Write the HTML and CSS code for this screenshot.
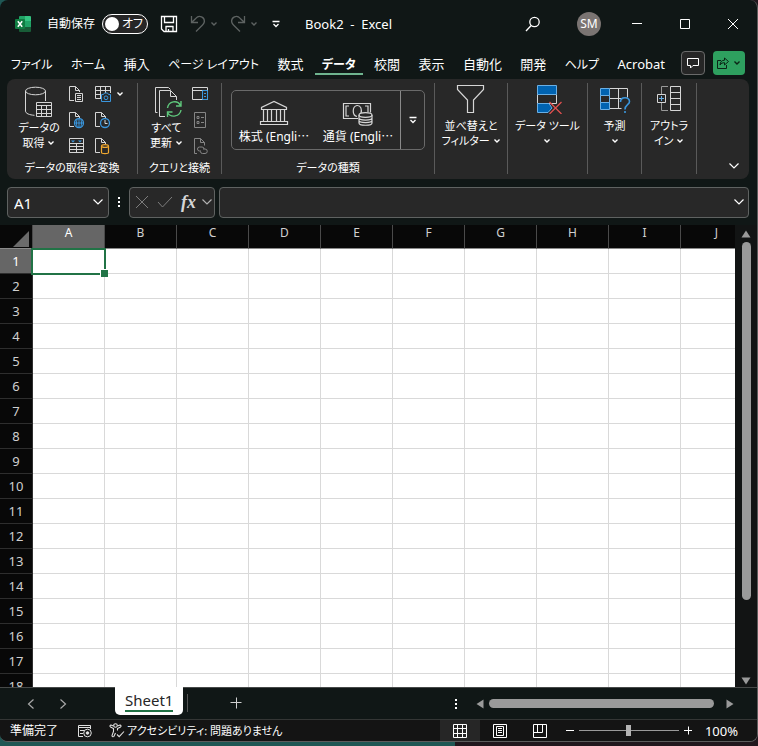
FILE: index.html
```html
<!DOCTYPE html>
<html lang="ja">
<head>
    <meta charset="UTF-8">
    <meta name="viewport" content="width=device-width, initial-scale=1.0">
    <title>Book2 - Excel</title>
    <link rel="stylesheet" href="styles.css">
</head>
<body>

<svg class="defs" aria-hidden="true">
    <symbol id="chev" viewBox="0 0 8 8"><path d="M1.500 2.500 4 5l2.500-2.500" fill="none" stroke="currentColor" stroke-width="1.400"/></symbol>
    <symbol id="chev-lg" viewBox="0 0 12 12"><path d="M1.500 3.500 6 8l4.500-4.500" fill="none" stroke="currentColor" stroke-width="1.200"/></symbol>
    <symbol id="more" viewBox="0 0 8 8"><path d="M.5 1.500h7M1.500 4 4 6.500 6.500 4" fill="none" stroke="currentColor" stroke-width="1.300"/></symbol>
    <symbol id="dots" viewBox="0 0 4 12"><path d="M1 1h2v2H1zM1 5h2v2H1zM1 9h2v2H1z" fill="currentColor"/></symbol>
    <symbol id="page" viewBox="0 0 16 18"><path d="M6 15.500H1.500V1.500h6l4 4V7M7.500 1.500v4h4" fill="none" stroke="#d6d6d6"/></symbol>
</svg>

<div class="window">

    <!-- タイトルバー -->
    <header class="titlebar">
        <svg class="logo" width="16" height="16" viewBox="0 0 16 16">
            <path d="M5 0h6v5H4V1q0-1 1-1z" fill="#21a366"/>
            <path d="M10 0h5q1 0 1 1v4h-6z" fill="#33c481"/>
            <path d="M4 5h6v6H4z" fill="#107c41"/>
            <path d="M10 5h6v6h-6z" fill="#21a366"/>
            <path d="M4 11h12v4q0 1-1 1H5q-1 0-1-1z" fill="#185c37"/>
            <rect y="3" width="10" height="10" rx="1" fill="#107c41"/>
            <path d="M2.800 5.200 7.200 10.800M7.200 5.200 2.800 10.800" stroke="#fff" stroke-width="1.500"/>
        </svg>
        <label class="autosave">
            <span>自動保存</span>
            <span class="switch">
                <input type="checkbox" class="switch-input">
                <span class="knob"></span>
                <span class="switch-text">オフ</span>
            </span>
        </label>
        <div class="quick">
            <button class="icon-btn" aria-label="上書き保存">
                <svg width="18" height="18" viewBox="0 0 18 18" fill="none" stroke="#fff" stroke-width="1.300"><path d="M1.500 1.500h15v15H4l-2.500-2.500zM4.500 1.500v6h9v-6M6 16.500v-5h7v5M8.500 14v2.500"/></svg>
            </button>
            <button class="icon-btn dim" aria-label="元に戻す">
                <svg width="16" height="18" viewBox="0 0 16 18" fill="none" stroke="currentColor" stroke-width="1.300"><path d="M1.500 1v6.500H8M1.500 7.500 6 3.200C9-.3 15 2 14.300 7c-.3 1.500-1 2.300-2 3.300L6 16.500"/></svg>
                <svg width="8" height="8"><use href="#chev"/></svg>
            </button>
            <button class="icon-btn dim" aria-label="やり直し">
                <svg width="16" height="18" viewBox="0 0 16 18" fill="none" stroke="currentColor" stroke-width="1.300"><path d="M14.500 1v6.500H8M14.500 7.500 10 3.200C7-.3 1 2 1.700 7c.3 1.500 1 2.300 2 3.300L10 16.500"/></svg>
                <svg width="8" height="8"><use href="#chev"/></svg>
            </button>
            <button class="icon-btn" aria-label="クイック アクセス ツール バーのユーザー設定"><svg width="8" height="8"><use href="#more"/></svg></button>
        </div>
        <h1 class="doc-title">Book2  -  Excel</h1>
        <button class="icon-btn search" aria-label="検索">
            <svg width="16" height="16" viewBox="0 0 16 16" fill="none" stroke="#fff" stroke-width="1.300"><circle cx="9.500" cy="6" r="4.700"/><path d="M6.200 9.500 1 15"/></svg>
        </button>
        <button class="avatar">SM</button>
        <div class="win-btns">
            <button aria-label="最小化"><svg width="12" height="12" viewBox="0 0 12 12" stroke="#fff"><path d="M1 5.500h10"/></svg></button>
            <button aria-label="最大化"><svg width="12" height="12" viewBox="0 0 12 12" stroke="#fff" fill="none"><path d="M1.500 1.500h9v9h-9z"/></svg></button>
            <button aria-label="閉じる"><svg width="12" height="12" viewBox="0 0 12 12" stroke="#fff"><path d="m1 1 10 10M11 1 1 11"/></svg></button>
        </div>
    </header>

    <!-- リボンのタブ -->
    <div class="tabs-row">
        <nav class="tabs">
            <a href="#" class="kana">ファイル</a>
            <a href="#" class="kana">ホーム</a>
            <a href="#">挿入</a>
            <a href="#" class="kana">ページ レイアウト</a>
            <a href="#">数式</a>
            <a href="#" class="kana active">データ</a>
            <a href="#">校閲</a>
            <a href="#">表示</a>
            <a href="#">自動化</a>
            <a href="#">開発</a>
            <a href="#" class="kana">ヘルプ</a>
            <a href="#">Acrobat</a>
        </nav>
        <button class="comment" aria-label="コメント">
            <svg width="12" height="12" viewBox="0 0 12 12" fill="none" stroke="#fff"><path d="M.5 1.500h11v7H6L3.500 11V8.500h-3z"/></svg>
        </button>
        <button class="share" aria-label="共有">
            <svg width="12" height="12" viewBox="0 0 12 12" fill="none" stroke="#0b2416"><path d="M4 3.500H.5v8h9V8M7.500 1v2.200C4.500 3.300 3.300 5 3 8c1.200-1.800 2.500-2.300 4.500-2.300V8l4-3.500z"/></svg>
            <svg width="8" height="8"><use href="#chev"/></svg>
        </button>
    </div>

    <!-- リボン -->
    <section class="ribbon">
        <div class="group group-get">
            <div class="group-body">
                <button class="big">
                    <svg width="30" height="32" viewBox="0 0 30 32" fill="none" stroke="#d6d6d6">
                        <path d="M21.500 5v10M1.500 5v20c0 2.500 4 4 9 4.300"/><ellipse cx="11.500" cy="5" rx="10" ry="3.800"/>
                        <path fill="#282828" d="M12.500 16.500h15v14h-15z"/><path d="M12.500 19.500h15M12.500 23.500h15M12.500 27.500h15M17.500 19.500v11M22.500 19.500v11" />
                    </svg>
                    <span>データの<br>取得 <svg width="8" height="8"><use href="#chev"/></svg></span>
                </button>
                <div class="small-grid">
                    <button aria-label="テキストまたは CSV から"><svg width="18" height="18" viewBox="0 0 18 18"><use href="#page" width="16" height="18"/><path d="M7.500 8.500h7v8h-7z" fill="#282828" stroke="#d6d6d6"/><path d="M9 10.500h4M9 12.500h4M9 14.500h4" stroke="#d6d6d6"/></svg></button>
                    <button aria-label="画像から" class="with-chev"><svg width="18" height="18" viewBox="0 0 18 18" fill="none"><path d="M7 13.500H1.500v-12h15V8M1.500 5.500h15M1.500 9.500H7M6.500 1.500v12M11.500 1.500V8" stroke="#d6d6d6"/><path d="M7.500 9.500h2l1-1.500h3l1 1.500h2v7h-9z" stroke="#3a96dd" fill="#282828"/><circle cx="12" cy="12.800" r="1.900" stroke="#3a96dd"/></svg><svg width="8" height="8"><use href="#chev"/></svg></button>
                    <button aria-label="Web から"><svg width="18" height="18" viewBox="0 0 18 18" fill="none"><use href="#page" width="16" height="18"/><circle cx="11" cy="12" r="4.500" fill="#282828" stroke="#3a96dd" stroke-width="1.300"/><path d="M6.500 12h9M11 7.500v9M9 8.500q-1.200 3.500 0 7M13 8.500q1.200 3.500 0 7" stroke="#3a96dd"/></svg></button>
                    <button aria-label="最近使ったソース"><svg width="18" height="18" viewBox="0 0 18 18" fill="none"><use href="#page" width="16" height="18"/><circle cx="11" cy="12" r="4.500" fill="#282828" stroke="#3a96dd" stroke-width="1.300"/><path d="M11 9v3.500h2.500" stroke="#d6d6d6"/></svg></button>
                    <button aria-label="テーブルまたは範囲から"><svg width="18" height="18" viewBox="0 0 18 18" fill="none" stroke="#d6d6d6"><path d="M1.500 1.500h14v14h-14zM1.500 6.500h14M1.500 9.500h14M1.500 12.500h14M8.500 6.500v9"/><path d="M3 3.500h4L5 5.500zM10 3.500h4l-2 2z" fill="#3a96dd" stroke="none"/></svg></button>
                    <button aria-label="既存の接続"><svg width="18" height="18" viewBox="0 0 18 18"><use href="#page" width="16" height="18"/><path d="M7.500 9v6.500c0 1.500 7 1.500 7 0V9" fill="#282828" stroke="#f0a830" stroke-width="1.200"/><ellipse cx="11" cy="9" rx="3.500" ry="1.400" fill="#282828" stroke="#f0a830" stroke-width="1.200"/></svg></button>
                </div>
            </div>
            <div class="group-name">データの取得と変換</div>
        </div>

        <div class="group group-query">
            <div class="group-body">
                <button class="big">
                    <svg width="30" height="32" viewBox="0 0 30 32" fill="none" stroke="#d6d6d6">
                        <path d="M5.500 26.500h-2v-25h13l2 2"/><path d="M13 30.500H7.500v-26h11l6 6V14M18.500 4.500v6h6"/>
                        <path d="M15.500 22c1-7 10-8.500 13-2.500M29 15v5h-5M29 24c-1 6.500-10 8.500-13.500 2.500M15.500 31v-5h5" stroke="#5fc77c" stroke-width="1.400"/>
                    </svg>
                    <span>すべて<br>更新 <svg width="8" height="8"><use href="#chev"/></svg></span>
                </button>
                <div class="small-grid one">
                    <button aria-label="クエリと接続"><svg width="18" height="18" viewBox="0 0 18 18" fill="none"><path d="M1.500 2.500h15v12h-15zM1.500 5.500h15" stroke="#d6d6d6"/><path d="M11.500 5.500h5v9h-5z" stroke="#3a96dd"/><path d="M13 8.500h2M13 11.500h2" stroke="#3a96dd"/></svg></button>
                    <button aria-label="プロパティ"><svg width="18" height="18" viewBox="0 0 18 18" fill="none" stroke="#858585"><path d="M3.500 1.500h11v15h-11zM6 5.500h2v2H6zM6 10.500h2v2H6zM10 6.500h3M10 11.500h3"/></svg></button>
                    <button aria-label="リンクの編集"><svg width="18" height="18" viewBox="0 0 18 18" fill="none" stroke="#858585"><path d="M6 16.500H3.500v-15h6l4 4v3M9.500 1.500v4h4"/><path d="M10 14H8.500a2 2 0 0 1 0-4h2.500a2 2 0 0 1 2 2M12 12h2a2 2 0 0 1 0 4.500h-2.500a2 2 0 0 1-2-2"/></svg></button>
                </div>
            </div>
            <div class="group-name">クエリと接続</div>
        </div>

        <div class="group group-types">
            <div class="group-body">
                <div class="gallery">
                    <button class="type">
                        <svg width="30" height="26" viewBox="0 0 30 26" fill="none" stroke="#d6d6d6" stroke-width="1.200"><path d="M2.500 9.500v-2L15 1.500l12.500 6v2zM4.500 9.500v12M8.500 9.500v12M12.500 9.500v12M17.500 9.500v12M21.500 9.500v12M25.500 9.500v12M1.500 21.500h27v3h-27z"/></svg>
                        <span>株式 (Engli⋯</span>
                    </button>
                    <button class="type">
                        <svg width="32" height="26" viewBox="0 0 32 26" fill="none" stroke="#d6d6d6" stroke-width="1.200"><path d="M16 18.500H1.500v-15h27v9"/><path d="M7 6H4v10h3M23 6h3v6"/><path d="M15 16.500c-5-1-5-10 0-11 4-.3 5 4 4 8"/><ellipse cx="23.500" cy="15" rx="6.500" ry="2.300" fill="#282828"/><path d="M17 15v8c0 3 13 3 13 0v-8M17 18c0 2.700 13 2.700 13 0M17 20.600c0 2.700 13 2.700 13 0"/></svg>
                        <span>通貨 (Engli⋯</span>
                    </button>
                    <button class="gallery-more" aria-label="その他"><svg width="8" height="8"><use href="#more"/></svg></button>
                </div>
            </div>
            <div class="group-name">データの種類</div>
        </div>

        <div class="group group-sort">
            <button class="big collapsed">
                <svg width="30" height="30" viewBox="0 0 30 30" fill="none" stroke="#d6d6d6" stroke-width="1.200"><path d="M1.500 1.500h26v4L17.500 16v12.500h-6V16L1.500 5.500z"/></svg>
                <span>並べ替えと<br>フィルター <svg width="8" height="8"><use href="#chev"/></svg></span>
            </button>
        </div>
        <div class="group group-tools">
            <button class="big collapsed">
                <svg width="30" height="30" viewBox="0 0 30 30" fill="none"><path d="M5.500 10.500h19v9h-19z" stroke="#d6d6d6"/><path d="M5.500 1.500h19v9h-19z" fill="#0063b1" stroke="#69afe5"/><path d="M5.500 19.500H17l3 4.500-4 4.500H5.500z" fill="#0063b1" stroke="#69afe5"/><path d="m17.500 18 12 12M29.500 18l-12 12" stroke="#e0504f" stroke-width="1.300"/></svg>
                <span>データ ツール<br><svg width="8" height="8"><use href="#chev"/></svg></span>
            </button>
        </div>
        <div class="group group-forecast">
            <button class="big collapsed">
                <svg width="32" height="30" viewBox="0 0 32 30" fill="none"><path d="M10.500 4.500h18v9M19.500 4.500v20M10.500 14.500h13M10.500 24.500h12" stroke="#d6d6d6"/><path d="M1.500 4.500h9v7h-9zM1.500 18.500h9v7h-9z" fill="#0063b1" stroke="#69afe5"/><path d="M1.500 11.500h9v7h-9z" stroke="#69afe5"/><path d="M21.500 18c0-5.500 9-5.500 9-.5 0 3.500-4.500 3-4.500 8M26 27v2" stroke="#3a96dd" stroke-width="1.600"/></svg>
                <span>予測<br><svg width="8" height="8"><use href="#chev"/></svg></span>
            </button>
        </div>
        <div class="group group-outline">
            <button class="big collapsed">
                <svg width="26" height="30" viewBox="0 0 26 30" fill="none" stroke="#d6d6d6"><path d="M14.500 2.500h10v24h-10zM14.500 8.500h10M14.500 14.500h10M14.500 20.500h10"/><path d="M12 2.500H5.500v8M5.500 18.500v8H12" stroke="#999"/><path d="M1.500 10.500h8v8h-8z"/><path d="M5.500 12v5M3 14.500h5" stroke="#69afe5"/></svg>
                <span>アウトラ<br>イン <svg width="8" height="8"><use href="#chev"/></svg></span>
            </button>
        </div>
        <button class="collapse" aria-label="リボンを折りたたむ"><svg width="12" height="12"><use href="#chev-lg"/></svg></button>
    </section>

    <!-- 数式バー -->
    <div class="formula-row">
        <div class="box name-box">
            <input type="text" value="A1" aria-label="名前ボックス">
            <button aria-label="名前の一覧"><svg width="12" height="12"><use href="#chev-lg"/></svg></button>
        </div>
        <svg class="grip" width="4" height="12"><use href="#dots"/></svg>
        <div class="box fx-box">
            <button class="faint" aria-label="キャンセル"><svg width="14" height="14" viewBox="0 0 14 14" fill="none" stroke="currentColor"><path d="m1 1 12 12M13 1 1 13"/></svg></button>
            <button class="faint" aria-label="入力"><svg width="16" height="14" viewBox="0 0 16 14" fill="none" stroke="currentColor"><path d="m1 7 4.500 5L15 2"/></svg></button>
            <button class="fx" aria-label="関数の挿入">fx</button>
            <button class="fx-list" aria-label="関数の一覧"><svg width="12" height="12"><use href="#chev-lg"/></svg></button>
        </div>
        <div class="box formula-box">
            <input type="text" aria-label="数式バー">
            <button aria-label="数式バーの展開"><svg width="12" height="12"><use href="#chev-lg"/></svg></button>
        </div>
    </div>

    <!-- シート -->
    <main class="sheet-area">
        <div class="grid">
            <table class="cells">
                <thead>
                    <tr id="columns">
                        <th class="corner"><svg width="16" height="16" viewBox="0 0 16 16"><path d="M16 0v16H0z" fill="#6b6b6b"/></svg></th>
                    </tr>
                </thead>
                <tbody id="rows"></tbody>
            </table>
        </div>
        <div class="vscroll">
            <button aria-label="上へ"><svg width="10" height="8" viewBox="0 0 10 8"><path d="M5 .5 9.500 7.500h-9z" fill="#9a9a9a"/></svg></button>
            <div class="vtrack"><div class="vthumb"></div></div>
            <button aria-label="下へ"><svg width="10" height="8" viewBox="0 0 10 8"><path d="M.5.5h9L5 7.500z" fill="#9a9a9a"/></svg></button>
        </div>
    </main>

    <div class="sheet-bar">
        <div class="sheet-nav">
            <button aria-label="前のシート"><svg width="8" height="12" viewBox="0 0 8 12" fill="none" stroke="#a8a8a8" stroke-width="1.200"><path d="M6.500 1.500 1.500 6l5 4.500"/></svg></button>
            <button aria-label="次のシート"><svg width="8" height="12" viewBox="0 0 8 12" fill="none" stroke="#a8a8a8" stroke-width="1.200"><path d="m1.500 1.500 5 4.500-5 4.500"/></svg></button>
        </div>
        <button class="sheet-tab"><span>Sheet1</span></button>
        <button class="add-sheet" aria-label="新しいシート"><svg width="12" height="12" viewBox="0 0 12 12" stroke="#d0d0d0"><path d="M6.500 .5v11M.5 5.500h11"/></svg></button>
        <div class="hscroll">
            <svg class="grip" width="4" height="12"><use href="#dots"/></svg>
            <button aria-label="左へ"><svg width="8" height="10" viewBox="0 0 8 10"><path d="M7.500.5v9L.5 5z" fill="#9a9a9a"/></svg></button>
            <div class="htrack"><div class="hthumb"></div></div>
            <button aria-label="右へ"><svg width="8" height="10" viewBox="0 0 8 10"><path d="M.5.5v9l7-4.500z" fill="#9a9a9a"/></svg></button>
        </div>
    </div>

    <footer class="status">
        <span>準備完了</span>
        <button class="macro" aria-label="マクロの記録"><svg width="16" height="14" viewBox="0 0 16 14" fill="none" stroke="#e0e0e0"><path d="M6 12.500H1.500v-11h12V5M1.500 3.500h12M3 6.500h4M3 9.500h3"/><circle cx="10.500" cy="9" r="3.800"/><circle cx="10.500" cy="9" r="1.300" fill="#e0e0e0"/></svg></button>
        <button class="access">
            <svg width="16" height="15" viewBox="0 0 16 15" fill="none" stroke="#e0e0e0" stroke-width="1.100"><circle cx="6.500" cy="2.500" r="1.800"/><path d="M4.500 3 2 2C.8 2 .7 3.500 1.500 4l3 1.500v3L3 12.500c0 1.500 1.500 1.500 2 .7L6.500 10M8.500 3 11 2c1.200 0 1.300 1.500.5 2l-3 1.500v2M8 11.500l2.200 2.200L15 8.500"/></svg>
            アクセシビリティ: 問題ありません
        </button>
        <div class="views">
            <button class="on" aria-label="標準"><svg width="14" height="14" viewBox="0 0 14 14" fill="none" stroke="#fff"><path d="M.5.5h13v13H.5zM.5 4.500h13M.5 9.500h13M4.500.5v13M9.500.5v13"/></svg></button>
            <button aria-label="ページ レイアウト"><svg width="14" height="14" viewBox="0 0 14 14" fill="none" stroke="#fff"><path d="M.5.5h13v13H.5zM3.500 2.500h7v9h-7zM5 4.500h4M5 6.500h4M5 8.500h4"/></svg></button>
            <button aria-label="改ページ プレビュー"><svg width="14" height="14" viewBox="0 0 14 14" fill="none" stroke="#fff"><path d="M.5.5h13v13H.5zM.5 8.500h9v-8M4.500.5v8"/></svg></button>
        </div>
        <div class="zoom">
            <button aria-label="縮小"><svg width="10" height="10" viewBox="0 0 10 10" stroke="#fff"><path d="M1 4.500h8"/></svg></button>
            <input type="range" min="0" max="100" value="50" aria-label="ズーム">
            <button aria-label="拡大"><svg width="10" height="10" viewBox="0 0 10 10" stroke="#fff"><path d="M1 4.500h8M5.500.5v8"/></svg></button>
            <button class="percent">100%</button>
        </div>
    </footer>
</div>

<script src="app.js"></script>
</body>
</html>
```

FILE: styles.css
```css
* {
    box-sizing: border-box;
}

body {
    margin: 0;
    height: 100vh;
    padding-bottom: 4px;
    overflow: hidden;
    background: linear-gradient(to right, #1f5754 0 60%, #21171d 60%);
    font-family: "Noto Sans", "Noto Sans CJK JP", sans-serif;
    font-feature-settings: "palt";
    font-size: 12px;
    line-height: 16px;
    color: #fff;
}

button,
input {
    font: inherit;
    font-feature-settings: inherit;
    color: inherit;
    background: none;
    border: 0;
    padding: 0;
    margin: 0;
}

button {
    display: flex;
    align-items: center;
    justify-content: center;
}

svg {
    flex: none;
}

.defs {
    position: absolute;
    width: 0;
    height: 0;
}

.window {
    display: flex;
    flex-direction: column;
    height: 100%;
    background: #101716;
    border: solid #5c5c5c;
    border-width: 0 1px 1px 0;
    border-radius: 8px;
    overflow: hidden;
}

/* タイトルバー */
.titlebar {
    display: flex;
    align-items: center;
    height: 48px;
    padding-left: 15px;
    flex: none;
}

.autosave {
    display: flex;
    align-items: center;
    gap: 7px;
    margin-left: 16px;
}

.switch {
    display: flex;
    align-items: center;
    justify-content: space-between;
    width: 46px;
    height: 20px;
    padding: 0 4px 0 2px;
    border: 1px solid #fff;
    border-radius: 10px;
    background: #262626;
}

.switch-input {
    position: absolute;
    opacity: 0;
}

.knob {
    width: 14px;
    height: 14px;
    border-radius: 50%;
    background: #fff;
}

.quick {
    display: flex;
    align-items: center;
    gap: 12px;
    margin-left: 12px;
}

.icon-btn {
    gap: 4px;
}

.dim {
    color: #5d6261;
}

.quick .icon-btn:last-child {
    margin-left: 2px;
}

.doc-title {
    flex: 1;
    margin: 0 0 0 25px;
    font-size: 13px;
    font-weight: normal;
    line-height: 18px;
    white-space: pre;
}

.avatar {
    width: 24px;
    height: 24px;
    margin: 0 12px 0 36px;
    border-radius: 50%;
    background: #7a7472;
    font-size: 12px;
}

.win-btns {
    display: flex;
}

.win-btns button {
    width: 48px;
    height: 32px;
}

/* タブ */
.tabs-row {
    display: flex;
    align-items: center;
    height: 30px;
    padding: 0 12px 0 11px;
    flex: none;
}

.tabs {
    display: flex;
    align-items: baseline;
    justify-content: space-between;
    flex: 1;
    padding-top: 2px;
    font-size: 13px;
}

.tabs a {
    color: #fff;
    line-height: 18px;
    text-decoration: none;
    white-space: nowrap;
}

.tabs .kana {
    font-size: 12px;
}

.tabs .active {
    position: relative;
    font-weight: bold;
}

.tabs .active::after {
    content: "";
    position: absolute;
    left: -7px;
    right: -7px;
    bottom: -1px;
    height: 2px;
    background: #6fb48f;
}

.comment,
.share {
    height: 24px;
    border-radius: 4px;
}

.comment {
    width: 24px;
    margin: 0 8px 0 16px;
    border: 1px solid #6a6a6a;
    background: #262626;
}

.share {
    width: 32px;
    gap: 4px;
    background: #2ea05f;
    color: #0b2416;
}

/* リボン */
.ribbon {
    display: flex;
    height: 100px;
    margin: 1px 8px 0 7px;
    padding: 4px 0 5px;
    border-radius: 8px;
    background: #282828;
    font-size: 11px;
    flex: none;
}

.group {
    display: flex;
    flex-direction: column;
    align-items: center;
    border-right: 1px solid #5a5a5a;
    flex: none;
}

.group-get { width: 131px; }
.group-query { width: 84px; }
.group-types { width: 213px; }
.group-sort { width: 73px; }
.group-tools { width: 80px; }
.group-forecast { width: 54px; }
.group-outline { width: 55px; }

.group-body {
    display: flex;
    flex: 1;
    gap: 8px;
}

.group-name {
    line-height: 12px;
    white-space: nowrap;
}

.big {
    flex-direction: column;
    justify-content: flex-start;
    padding-top: 3px;
    gap: 2px;
    line-height: 15px;
    white-space: nowrap;
}

.big.collapsed {
    padding-top: 1px;
    gap: 4px;
}

.small-grid {
    display: grid;
    grid-template-columns: 18px 32px;
    grid-auto-rows: 18px;
    gap: 8px;
    padding-top: 2px;
}

.small-grid button {
    justify-content: flex-start;
}

.small-grid.one {
    grid-template-columns: 18px;
}

.with-chev {
    gap: 4px;
}

.gallery {
    display: flex;
    height: 60px;
    margin-top: 7px;
    border: 1px solid #6a6a6a;
    border-radius: 5px;
}

.type {
    flex-direction: column;
    justify-content: flex-end;
    width: 84px;
    gap: 3px;
    padding-bottom: 4px;
    font-size: 12px;
    white-space: nowrap;
}

.gallery-more {
    width: 24px;
    border-left: 1px solid #8a8a8a;
}

.collapse {
    align-self: flex-end;
    margin: 0 9px 2px auto;
}

/* 数式バー */
.formula-row {
    display: flex;
    align-items: center;
    height: 46px;
    padding: 0 8px 0 7px;
    flex: none;
}

.box {
    display: flex;
    align-items: center;
    height: 31px;
    border: 1px solid #5f6261;
    border-radius: 4px;
    background: #282828;
}

.box input {
    flex: 1;
    min-width: 0;
    padding: 2px 0 0 6px;
    font-size: 15px;
}

.name-box {
    width: 102px;
    padding-right: 4px;
}

.formula-row .grip {
    margin: 0 8px;
}

.fx-box {
    width: 86px;
    padding-left: 5px;
    margin-right: 4px;
}

.faint {
    margin-right: 8px;
    color: #7c7c7c;
}

.fx {
    font: italic bold 18px "Liberation Serif", serif;
    color: #d6d6d6;
}

.fx-list {
    margin: 0 1px 0 auto;
    color: #b0b0b0;
}

.formula-box {
    flex: 1;
    padding-right: 3px;
}

/* シート */
.sheet-area {
    display: flex;
    flex: 1;
    min-height: 0;
}

.grid {
    flex: 1;
    min-width: 0;
    overflow: hidden;
    background: #fff;
}

.cells {
    width: 753px;
    table-layout: fixed;
    border-collapse: separate;
    border-spacing: 0;
}

.cells th,
.cells td {
    width: 72px;
    height: 25px;
    padding: 0;
    border: solid #d9d9d9;
    border-width: 0 1px 1px 0;
}

.cells th {
    background: #080808;
    border-color: #4a4a4a;
    color: #d0d0d0;
    font-size: 13px;
    font-weight: normal;
}

.cells thead th {
    height: 24px;
    padding-bottom: 7px;
    font-size: 12px;
    line-height: 16px;
    border-bottom-color: #8a8a8a;
}

.cells tbody th {
    border-color: #2e2e2e;
}

.cells .corner {
    width: 33px;
    padding: 4px 3px 0 0;
    text-align: right;
    line-height: 0;
}

.cells .selected {
    background: #666;
    color: #fff;
}

.cells .cursor {
    position: relative;
}

.cursor::before,
.cursor::after {
    content: "";
    position: absolute;
}

.cursor::before {
    inset: -1px -2px -2px -2px;
    border: 2px solid #217346;
}

.cursor::after {
    right: -4px;
    bottom: -4px;
    width: 7px;
    height: 7px;
    border: solid #fff;
    border-width: 1px 0 0 1px;
    background: #217346;
}

.vscroll {
    display: flex;
    flex-direction: column;
    align-items: center;
    gap: 4px;
    width: 22px;
    padding: 5px 0 2px;
    background: #121414;
}

.vtrack {
    display: flex;
    flex-direction: column;
    flex: 1;
}

.vthumb {
    width: 9px;
    height: 83%;
    border-radius: 5px;
    background: #9a9a9a;
}

/* シート見出し */
.sheet-bar {
    display: flex;
    height: 32px;
    border-top: 1px solid #474a49;
    flex: none;
}

.sheet-nav {
    display: flex;
    align-items: center;
    gap: 24px;
    width: 115px;
    padding-left: 27px;
}

.sheet-tab {
    height: 28px;
    margin-top: -1px;
    padding: 0 10px;
    border-radius: 0 0 5px 5px;
    background: #fff;
    color: #262626;
    font-size: 15px;
}

.sheet-tab span {
    padding: 2px 0;
    border-bottom: 2px solid #217346;
}

.add-sheet {
    width: 97px;
    height: 18px;
    margin: 6px 0 0 4px;
    border-left: 1px solid #555;
}

.hscroll {
    display: flex;
    align-items: center;
    gap: 5px;
    width: 40%;
    margin-left: auto;
    padding-right: 23px;
}

.hscroll .grip {
    margin-right: 13px;
}

.htrack {
    flex: 1;
}

.hthumb {
    width: 97%;
    height: 9px;
    border-radius: 5px;
    background: #9a9a9a;
}

/* ステータスバー */
.status {
    display: flex;
    align-items: center;
    height: 22px;
    padding-left: 10px;
    border-top: 1px solid #343635;
    background: #141414;
    flex: none;
}

.macro {
    margin: 0 16px 0 19px;
}

.access {
    gap: 2px;
    font-size: 11px;
    white-space: nowrap;
}

.views {
    display: flex;
    align-self: stretch;
    margin-left: auto;
}

.views button {
    width: 40px;
}

.views .on {
    background: #262626;
}

.zoom {
    display: flex;
    align-items: center;
    gap: 4px;
    padding: 0 19px 0 5px;
}

.zoom input {
    appearance: none;
    width: 100px;
    height: 12px;
    background: linear-gradient(#9a9a9a, #9a9a9a) center / 100% 1px no-repeat;
}

.zoom input::-webkit-slider-thumb {
    appearance: none;
    width: 5px;
    height: 11px;
    background: #b4b4b4;
}

.percent {
    margin-left: 8px;
    font-size: 13px;
    line-height: 18px;
}
```

FILE: app.js
```js
const columns = document.getElementById('columns');
const rows = document.getElementById('rows');
const letters = 'ABCDEFGHIJ'.split('');

// 列見出し
letters.forEach((letter, i) => {
    const th = document.createElement('th');
    th.textContent = letter;
    if (i === 0) th.className = 'selected';
    columns.appendChild(th);
});

// 行とセル
for (let r = 1; r <= 18; r++) {
    const tr = document.createElement('tr');
    const th = document.createElement('th');
    th.textContent = r;
    if (r === 1) th.className = 'selected';
    tr.appendChild(th);

    letters.forEach((letter, i) => {
        const td = document.createElement('td');
        if (r === 1 && i === 0) td.className = 'cursor';
        tr.appendChild(td);
    });
    rows.appendChild(tr);
}
```
